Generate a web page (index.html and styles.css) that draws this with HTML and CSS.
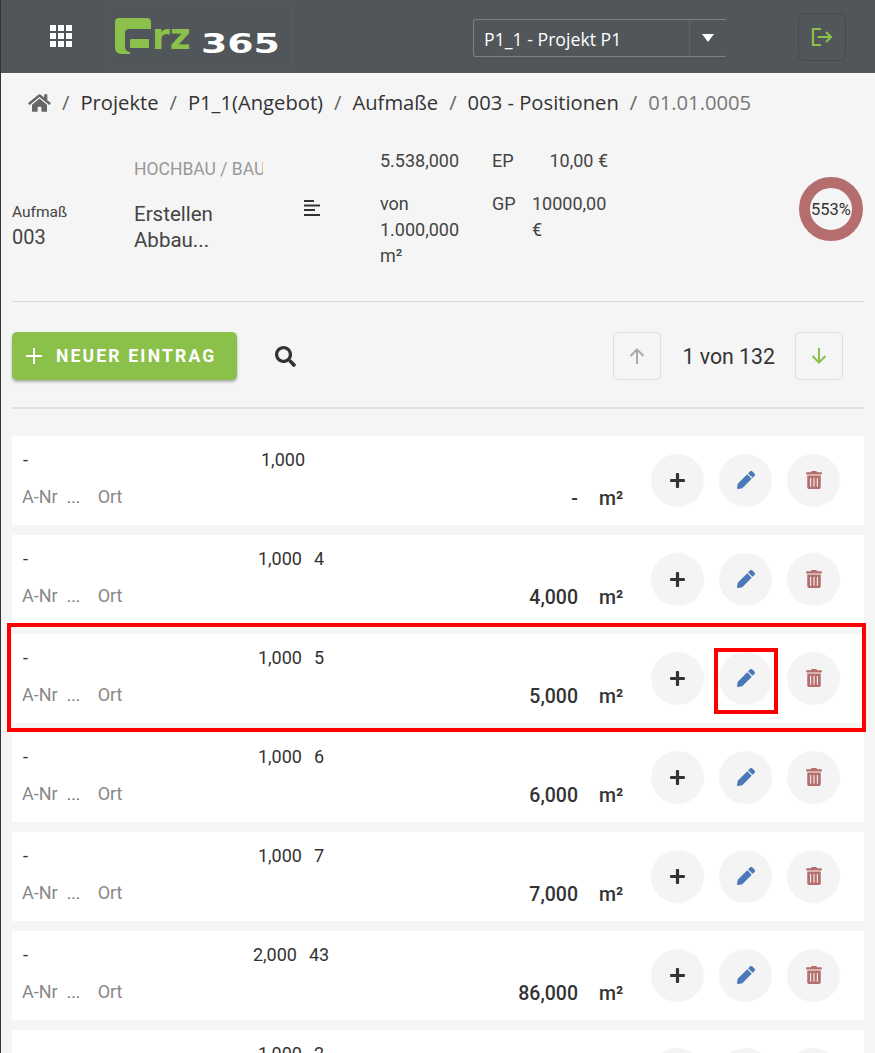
FILE: index.html
```html
<!DOCTYPE html>
<html lang="de">
	<head>
		<meta charset="UTF-8" />
		<meta name="viewport" content="width=device-width, initial-scale=1.0" />
		<title>Aufmaß - Positionen</title>
		<link rel="stylesheet" href="styles.css">
	</head>
	<body>
		<svg class="icon-defs" aria-hidden="true">
			<symbol id="i-plus" viewBox="0 0 448 512"><path d="M416 208H272V64c0-17.67-14.33-32-32-32h-32c-17.67 0-32 14.33-32 32v144H32c-17.67 0-32 14.33-32 32v32c0 17.67 14.33 32 32 32h144v144c0 17.67 14.33 32 32 32h32c17.67 0 32-14.33 32-32V304h144c17.67 0 32-14.33 32-32v-32c0-17.67-14.33-32-32-32z"/></symbol>
			<symbol id="i-pen" viewBox="0 0 512 512"><path d="M497.9 142.1l-46.1 46.1c-4.7 4.7-12.3 4.7-17 0l-111-111c-4.7-4.7-4.7-12.3 0-17l46.1-46.1c18.7-18.7 49.1-18.7 67.9 0l60.1 60.1c18.8 18.7 18.8 49.1 0 67.9zM284.2 99.8L21.6 362.4.4 483.9c-2.9 16.4 11.4 30.6 27.8 27.8l121.5-21.3 262.6-262.6c4.7-4.7 4.7-12.3 0-17l-111-111c-4.8-4.7-12.4-4.7-17.1 0z"/></symbol>
			<symbol id="i-trash" viewBox="0 0 448 512"><path d="M32 464a48 48 0 0 0 48 48h288a48 48 0 0 0 48-48V128H32zm272-256a16 16 0 0 1 32 0v224a16 16 0 0 1-32 0zm-96 0a16 16 0 0 1 32 0v224a16 16 0 0 1-32 0zm-96 0a16 16 0 0 1 32 0v224a16 16 0 0 1-32 0zM432 32H312l-9.4-18.7A24 24 0 0 0 281.1 0H166.8a23.72 23.72 0 0 0-21.4 13.3L136 32H16A16 16 0 0 0 0 48v32a16 16 0 0 0 16 16h416a16 16 0 0 0 16-16V48a16 16 0 0 0-16-16z"/></symbol>
		</svg>

		<!-- Kopfzeile -->
		<header class="topbar">
			<svg class="apps" viewBox="0 0 23 23" width="23" height="23" fill="#fff">
				<rect x="0" y="0" width="6" height="6"/><rect x="8" y="0" width="6" height="6"/><rect x="16" y="0" width="6" height="6"/>
				<rect x="0" y="8" width="6" height="6"/><rect x="8" y="8" width="6" height="6"/><rect x="16" y="8" width="6" height="6"/>
				<rect x="0" y="16" width="6" height="6"/><rect x="8" y="16" width="6" height="6"/><rect x="16" y="16" width="6" height="6"/>
			</svg>
			<div class="logo">
				<svg class="logo-mark" viewBox="0 0 36 36" width="36" height="36">
					<path fill="#8bc04b" d="M4 0H32a4 4 0 0 1 4 4V11H14a4 4 0 0 0-4 4V28a5 5 0 0 0 5 6v2H6a6 6 0 0 1-6-6V4a4 4 0 0 1 4-4z"/>
					<rect x="15" y="21" width="19" height="9" rx="1" fill="#8bc04b"/>
				</svg>
				<span class="logo-rz">rz</span>
				<span class="logo-num">365</span>
			</div>
			<div class="project-select">
				<span class="project-name">P1_1 - Projekt P1</span>
				<span class="project-caret"></span>
			</div>
			<button class="logout">
				<svg viewBox="0 0 22 20" width="22" height="20" fill="none" stroke="#8bc04b" stroke-width="2.2">
					<path d="M10 2H2v16h8"/>
					<path d="M6.500 10H20M15 5l5 5-5 5"/>
				</svg>
			</button>
		</header>

		<main class="page">
			<!-- Brotkrumen -->
			<nav class="crumbs">
				<svg class="crumb-home" viewBox="0 0 576 512" width="23" height="20" fill="#666"><path d="M280.37 148.26L96 300.11V464a16 16 0 0 0 16 16l112.06-.29a16 16 0 0 0 15.92-16V368a16 16 0 0 1 16-16h64a16 16 0 0 1 16 16v95.64a16 16 0 0 0 16 16.05L464 480a16 16 0 0 0 16-16V300L295.67 148.26a12.19 12.19 0 0 0-15.3 0zM571.6 251.47L488 182.56V44.05a12 12 0 0 0-12-12h-56a12 12 0 0 0-12 12v72.61L318.47 43a48 48 0 0 0-61 0L4.34 251.47a12 12 0 0 0-1.6 16.9l25.5 31A12 12 0 0 0 45.15 301l235.22-193.74a12.19 12.19 0 0 1 15.3 0L530.9 301a12 12 0 0 0 16.9-1.6l25.5-31a12 12 0 0 0-1.7-16.93z"/></svg>
				<span class="sep">/</span><a>Projekte</a>
				<span class="sep">/</span><a>P1_1(Angebot)</a>
				<span class="sep">/</span><a>Aufmaße</a>
				<span class="sep">/</span><a>003 - Positionen</a>
				<span class="sep">/</span><span class="crumb-current">01.01.0005</span>
			</nav>

			<!-- Positionsdaten -->
			<section class="summary">
				<div class="sum-id">
					<div class="sum-id-label">Aufmaß</div>
					<div class="sum-id-value">003</div>
				</div>
				<div class="sum-title">
					<div class="sum-group">HOCHBAU / BAUSTELLE</div>
					<div class="sum-text">Erstellen Abbau...</div>
				</div>
				<svg class="sum-icon" viewBox="0 0 17 16" width="17" height="16" fill="#333">
					<rect x="0" y="0" width="10" height="2"/><rect x="0" y="4.500" width="16" height="2"/><rect x="0" y="9" width="11" height="2"/><rect x="0" y="14" width="16" height="2"/>
				</svg>
				<div class="sum-qty">
					<div class="sum-qty-top">5.538,000</div>
					<div class="sum-qty-of">von 1.000,000 m²</div>
				</div>
				<div class="sum-prices">
					<span class="price-label">EP</span><span class="price-value price-ep">10,00 €</span>
					<span class="price-label">GP</span><span class="price-value">10000,00 €</span>
				</div>
				<div class="gauge"><span>553%</span></div>
			</section>

			<!-- Werkzeugleiste -->
			<section class="toolbar">
				<button class="btn-new">
					<svg viewBox="0 0 16 16" width="16" height="16" stroke="#fff" stroke-width="2"><path d="M8 0v16M0 8h16"/></svg>
					NEUER EINTRAG
				</button>
				<svg class="search" viewBox="0 0 512 512" width="21" height="21" fill="#333"><path d="M505 442.7L405.3 343c-4.500-4.500-10.600-7-17-7H372c27.600-35.300 44-79.700 44-128C416 93.100 322.900 0 208 0S0 93.100 0 208s93.100 208 208 208c48.300 0 92.700-16.400 128-44v16.300c0 6.400 2.500 12.500 7 17l99.700 99.700c9.400 9.400 24.600 9.400 33.900 0l28.300-28.300c9.400-9.400 9.400-24.600.1-34zM208 336c-70.700 0-128-57.200-128-128 0-70.700 57.200-128 128-128 70.700 0 128 57.200 128 128 0 70.700-57.200 128-128 128z"/></svg>
				<div class="pager">
					<button class="pager-btn">
						<svg viewBox="0 0 16 16" width="16" height="16" fill="none" stroke="#aaa" stroke-width="2"><path d="M8 16V1M1.500 8L8 1.500 14.500 8"/></svg>
					</button>
					<span class="pager-text">1 von 132</span>
					<button class="pager-btn">
						<svg viewBox="0 0 16 16" width="16" height="16" fill="none" stroke="#8bc04b" stroke-width="2"><path d="M8 0v15M1.500 8L8 14.500 14.500 8"/></svg>
					</button>
				</div>
			</section>

			<!-- Liste der Einträge -->
			<section class="entries">
				<article class="entry">
					<div class="entry-info">
						<div class="entry-line">
							<span class="entry-dash">-</span>
							<span class="entry-calc"><span>1,000</span><span class="entry-factor"></span></span>
						</div>
						<div class="entry-line entry-line-sub">
							<span class="entry-meta">A-Nr</span><span class="entry-more">...</span><span class="entry-meta">Ort</span>
							<span class="entry-total">-</span><span class="entry-unit">m²</span>
						</div>
					</div>
					<div class="entry-actions">
						<button class="round round-add"><svg width="15" height="17"><use href="#i-plus"/></svg></button>
						<button class="round round-edit"><svg width="18" height="18"><use href="#i-pen"/></svg></button>
						<button class="round round-del"><svg width="16" height="18"><use href="#i-trash"/></svg></button>
					</div>
				</article>

				<article class="entry">
					<div class="entry-info">
						<div class="entry-line">
							<span class="entry-dash">-</span>
							<span class="entry-calc"><span>1,000</span><span class="entry-factor">4</span></span>
						</div>
						<div class="entry-line entry-line-sub">
							<span class="entry-meta">A-Nr</span><span class="entry-more">...</span><span class="entry-meta">Ort</span>
							<span class="entry-total">4,000</span><span class="entry-unit">m²</span>
						</div>
					</div>
					<div class="entry-actions">
						<button class="round round-add"><svg width="15" height="17"><use href="#i-plus"/></svg></button>
						<button class="round round-edit"><svg width="18" height="18"><use href="#i-pen"/></svg></button>
						<button class="round round-del"><svg width="16" height="18"><use href="#i-trash"/></svg></button>
					</div>
				</article>

				<article class="entry">
					<div class="entry-info">
						<div class="entry-line">
							<span class="entry-dash">-</span>
							<span class="entry-calc"><span>1,000</span><span class="entry-factor">5</span></span>
						</div>
						<div class="entry-line entry-line-sub">
							<span class="entry-meta">A-Nr</span><span class="entry-more">...</span><span class="entry-meta">Ort</span>
							<span class="entry-total">5,000</span><span class="entry-unit">m²</span>
						</div>
					</div>
					<div class="entry-actions">
						<button class="round round-add"><svg width="15" height="17"><use href="#i-plus"/></svg></button>
						<button class="round round-edit"><svg width="18" height="18"><use href="#i-pen"/></svg></button>
						<button class="round round-del"><svg width="16" height="18"><use href="#i-trash"/></svg></button>
					</div>
					<div class="mark-row"></div>
					<div class="mark-btn"></div>
				</article>

				<article class="entry">
					<div class="entry-info">
						<div class="entry-line">
							<span class="entry-dash">-</span>
							<span class="entry-calc"><span>1,000</span><span class="entry-factor">6</span></span>
						</div>
						<div class="entry-line entry-line-sub">
							<span class="entry-meta">A-Nr</span><span class="entry-more">...</span><span class="entry-meta">Ort</span>
							<span class="entry-total">6,000</span><span class="entry-unit">m²</span>
						</div>
					</div>
					<div class="entry-actions">
						<button class="round round-add"><svg width="15" height="17"><use href="#i-plus"/></svg></button>
						<button class="round round-edit"><svg width="18" height="18"><use href="#i-pen"/></svg></button>
						<button class="round round-del"><svg width="16" height="18"><use href="#i-trash"/></svg></button>
					</div>
				</article>

				<article class="entry">
					<div class="entry-info">
						<div class="entry-line">
							<span class="entry-dash">-</span>
							<span class="entry-calc"><span>1,000</span><span class="entry-factor">7</span></span>
						</div>
						<div class="entry-line entry-line-sub">
							<span class="entry-meta">A-Nr</span><span class="entry-more">...</span><span class="entry-meta">Ort</span>
							<span class="entry-total">7,000</span><span class="entry-unit">m²</span>
						</div>
					</div>
					<div class="entry-actions">
						<button class="round round-add"><svg width="15" height="17"><use href="#i-plus"/></svg></button>
						<button class="round round-edit"><svg width="18" height="18"><use href="#i-pen"/></svg></button>
						<button class="round round-del"><svg width="16" height="18"><use href="#i-trash"/></svg></button>
					</div>
				</article>

				<article class="entry">
					<div class="entry-info">
						<div class="entry-line">
							<span class="entry-dash">-</span>
							<span class="entry-calc"><span>2,000</span><span class="entry-factor">43</span></span>
						</div>
						<div class="entry-line entry-line-sub">
							<span class="entry-meta">A-Nr</span><span class="entry-more">...</span><span class="entry-meta">Ort</span>
							<span class="entry-total">86,000</span><span class="entry-unit">m²</span>
						</div>
					</div>
					<div class="entry-actions">
						<button class="round round-add"><svg width="15" height="17"><use href="#i-plus"/></svg></button>
						<button class="round round-edit"><svg width="18" height="18"><use href="#i-pen"/></svg></button>
						<button class="round round-del"><svg width="16" height="18"><use href="#i-trash"/></svg></button>
					</div>
				</article>

				<article class="entry">
					<div class="entry-info">
						<div class="entry-line">
							<span class="entry-dash">-</span>
							<span class="entry-calc"><span>1,000</span><span class="entry-factor">2</span></span>
						</div>
						<div class="entry-line entry-line-sub">
							<span class="entry-meta">A-Nr</span><span class="entry-more">...</span><span class="entry-meta">Ort</span>
							<span class="entry-total">2,000</span><span class="entry-unit">m²</span>
						</div>
					</div>
					<div class="entry-actions">
						<button class="round round-add"><svg width="15" height="17"><use href="#i-plus"/></svg></button>
						<button class="round round-edit"><svg width="18" height="18"><use href="#i-pen"/></svg></button>
						<button class="round round-del"><svg width="16" height="18"><use href="#i-trash"/></svg></button>
					</div>
				</article>
			</section>
		</main>
	</body>
</html>
```

FILE: styles.css
```css
html,
body {
	height: 100%;
	overflow: hidden;
}
body {
	margin: 0;
	border-left: 1px solid #333;
	background-color: #f5f5f5;
	color: #333;
	font-family: Roboto, Arial, sans-serif;
	box-sizing: border-box;
}
button {
	padding: 0;
	font-family: inherit;
	cursor: pointer;
}
.icon-defs {
	display: none;
}

/* Kopfzeile */
.topbar {
	display: flex;
	align-items: center;
	height: 73px;
	background-color: #51565a;
}
.apps {
	margin-left: 49px;
	flex: none;
}
.logo {
	display: flex;
	align-items: center;
	box-sizing: border-box;
	width: 187px;
	height: 62px;
	margin-left: 33px;
	padding-left: 8px;
	border: 1px solid #565b5f;
	color: #fff;
}
.logo-mark {
	flex: none;
	margin-top: -1px;
}
.logo-rz {
	margin-left: 1px;
	margin-top: 1px;
	color: #8bc04b;
	font-family: "DejaVu Sans", sans-serif;
	font-weight: bold;
	font-size: 36px;
	line-height: 36px;
}
.logo-num {
	display: inline-block;
	margin-left: 10px;
	margin-top: 14px;
	font-family: "DejaVu Sans", sans-serif;
	font-weight: bold;
	font-size: 27px;
	line-height: 30px;
	transform: scaleX(1.4);
	transform-origin: left center;
}
.project-select {
	display: flex;
	align-items: center;
	box-sizing: border-box;
	width: 254px;
	height: 38px;
	margin-left: 180px;
	margin-top: 2px;
	border: 1px solid #7d8185;
	border-right-color: transparent;
	border-radius: 3px;
	color: #fff;
	font-family: "Open Sans", sans-serif;
	font-size: 17.700px;
}
.project-name {
	flex: 1;
	padding: 2px 0 0 10px;
	line-height: 34px;
	border-right: 1px solid #5f6468;
}
.project-caret {
	width: 0;
	height: 0;
	margin: 0 12px;
	border-left: 6px solid transparent;
	border-right: 6px solid transparent;
	border-top: 8px solid #fff;
}
.logout {
	display: flex;
	align-items: center;
	justify-content: center;
	width: 48px;
	height: 48px;
	margin-left: 71px;
	border: 1px solid #46494d;
	border-radius: 6px;
	background: transparent;
}

/* Brotkrumen */
.page {
	padding: 0 11px;
}
.crumbs {
	display: flex;
	align-items: center;
	height: 58px;
	padding: 0 0 2px 16px;
	color: #333;
	font-family: "Open Sans", sans-serif;
	font-size: 20.200px;
	white-space: nowrap;
}
.crumb-home {
	margin-top: 2px;
}
.sep {
	margin: 0 11px;
	color: #666;
}
.crumb-current {
	color: #777;
}

/* Positionsdaten */
.summary {
	display: grid;
	grid-template-columns: 122px 170px 76px 112px 1fr auto;
	align-items: start;
	height: 168px;
	border-bottom: 1px solid #d9d9d9;
	color: #444;
}
.sum-id {
	margin-top: 69px;
}
.sum-id-label {
	font-size: 15.500px;
	line-height: 20px;
}
.sum-id-value {
	font-size: 20px;
	line-height: 30px;
}
.sum-title {
	width: 129px;
	margin-top: 23px;
}
.sum-group {
	overflow: hidden;
	margin-bottom: 19px;
	color: #999;
	font-size: 17.500px;
	line-height: 26px;
	white-space: nowrap;
}
.sum-text {
	width: 110px;
	font-size: 20.500px;
	line-height: 26px;
}
.sum-icon {
	margin-top: 67px;
}
.sum-qty {
	width: 96px;
	margin-top: 15px;
	font-size: 18px;
	line-height: 26px;
}
.sum-qty-top {
	margin-bottom: 17px;
}
.sum-prices {
	display: grid;
	grid-template-columns: 40px 76px;
	row-gap: 17px;
	margin-top: 15px;
	font-size: 18px;
	line-height: 26px;
}
.price-ep {
	text-align: right;
}
.gauge {
	display: flex;
	align-items: center;
	justify-content: center;
	box-sizing: border-box;
	width: 64px;
	height: 64px;
	margin-top: 44px;
	margin-right: 1px;
	border: 11px solid #b56e6d;
	border-radius: 50%;
	color: #333;
	font-size: 16.500px;
	white-space: nowrap;
}

/* Werkzeugleiste */
.toolbar {
	display: flex;
	align-items: center;
	box-sizing: border-box;
	height: 107px;
	margin-bottom: 27px;
	padding-top: 3px;
	border-bottom: 2px solid #e0e0e0;
}
.btn-new {
	display: flex;
	align-items: center;
	gap: 14px;
	width: 225px;
	height: 48px;
	padding-left: 14px;
	border: none;
	border-radius: 5px;
	background-color: #8bc04b;
	box-shadow: 0 2px 3px rgba(0, 0, 0, 0.3);
	color: #fff;
	font-size: 17.500px;
	font-weight: 700;
	letter-spacing: 2.200px;
}
.search {
	margin-left: 38px;
}
.pager {
	display: flex;
	align-items: center;
	margin-left: auto;
	margin-right: 21px;
}
.pager-btn {
	display: flex;
	align-items: center;
	justify-content: center;
	width: 48px;
	height: 48px;
	border: 1px solid #e0e0e0;
	border-radius: 4px;
	background: #f5f5f5;
}
.pager-text {
	margin: 0 20px 0 21px;
	font-size: 21.300px;
}

/* Einträge */
.entries {
	display: flex;
	flex-direction: column;
	gap: 10px;
}
.entry {
	position: relative;
	display: flex;
	align-items: center;
	height: 89px;
	background: #fff;
	flex: none;
}
.entry-info {
	width: 639px;
	padding: 0 27px 0 11px;
	box-sizing: border-box;
	margin-top: -4px;
}
.entry-line {
	display: flex;
	align-items: center;
	height: 22px;
	font-size: 18px;
}
.entry-line-sub {
	margin-top: 17px;
}
.entry-dash {
	width: 200px;
}
.entry-calc {
	display: flex;
	justify-content: center;
	gap: 12px;
	width: 160px;
	margin-left: -12px;
}
.entry-factor {
	min-width: 4px;
}
.entry-meta {
	margin-bottom: 3px;
	color: #888;
}
.entry-meta:first-child {
	margin-left: -1px;
}
.entry-more {
	width: 31px;
	margin-left: 9px;
	margin-bottom: 3px;
	color: #666;
	font-size: 17px;
}
.entry-total {
	margin-left: auto;
	font-size: 19.500px;
	font-weight: 500;
}
.entry-unit {
	width: 25px;
	margin-left: 21px;
	font-size: 19.500px;
	font-weight: 500;
}
.entry-actions {
	display: flex;
	gap: 15px;
	margin-top: -1px;
}
.round {
	display: flex;
	align-items: center;
	justify-content: center;
	width: 53px;
	height: 53px;
	border: none;
	border-radius: 50%;
	background: #f4f4f4;
}
.round-add {
	fill: #333;
}
.round-edit {
	fill: #4a78b8;
}
.round-del {
	fill: #b56e6d;
}

/* rote Markierungen */
.mark-row {
	position: absolute;
	left: -5px;
	top: -11px;
	width: 859px;
	height: 109px;
	box-sizing: border-box;
	border: 4px solid #f00;
	pointer-events: none;
}
.mark-btn {
	position: absolute;
	left: 702px;
	top: 14px;
	width: 64px;
	height: 66px;
	box-sizing: border-box;
	border: 4px solid #f00;
	pointer-events: none;
}
```
